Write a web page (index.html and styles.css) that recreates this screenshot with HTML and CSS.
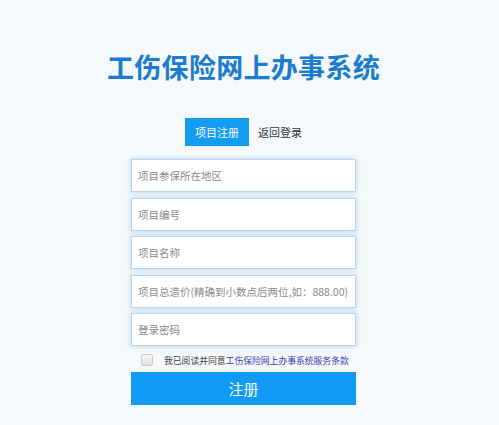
FILE: index.html
```html
<!DOCTYPE html>
<html lang="zh">
<head>
    <meta charset="UTF-8">
    <meta name="viewport" content="width=device-width, initial-scale=1.0">
    <title>工伤保险网上办事系统</title>
    <link rel="stylesheet" href="styles.css">
</head>
<body>
    <div class="page">
        <h1 class="title">工伤保险网上办事系统</h1>

        <div class="tab-group">
            <span class="tab active">项目注册</span>
            <span class="tab">返回登录</span>
        </div>

        <form class="form">
            <input class="field" type="text" placeholder="项目参保所在地区">
            <input class="field" type="text" placeholder="项目编号">
            <input class="field" type="text" placeholder="项目名称">
            <input class="field" type="text" placeholder="项目总造价(精确到小数点后两位,如：888.00)">
            <input class="field" type="password" placeholder="登录密码">

            <label class="agree">
                <span class="check"></span>
                <span>我已阅读并同意<a href="#" class="terms">工伤保险网上办事系统服务条款</a></span>
            </label>

            <button type="button" class="btn-submit">注册</button>
        </form>
    </div>
</body>
</html>
```

FILE: styles.css
```css
body {
    margin: 0;
    background-color: #f5f9fc;
    font-family: "Noto Sans CJK SC", "Liberation Sans", sans-serif;
}
.page {
    width: 487px;
    display: flex;
    flex-direction: column;
    align-items: center;
}
.title {
    margin: 51px 0 0;
    font-size: 27px;
    line-height: 32px;
    font-weight: bold;
    color: #1a7bcf;
    letter-spacing: 0.3px;
}
.tab-group {
    display: flex;
    align-items: center;
    gap: 9px;
    margin-top: 35px;
}
.tab {
    font-size: 11px;
    color: #333;
    line-height: 28px;
}
.tab.active {
    width: 64px;
    text-align: center;
    background: #149bf2;
    color: white;
}
.form {
    width: 225px;
    display: flex;
    flex-direction: column;
    margin-top: 13px;
}
.field {
    box-sizing: border-box;
    height: 33px;
    margin-bottom: 5.5px;
    padding: 0 6px;
    border: 1px solid #b9d6ee;
    background: white;
    box-shadow: 0 0 5px rgba(120, 180, 230, 0.55);
    font-family: inherit;
    font-size: 10.5px;
    color: #333;
    outline: none;
}
.field::placeholder {
    color: #8a8a8a;
}
.agree {
    display: flex;
    align-items: center;
    gap: 11px;
    margin: 0 0 0 10px;
    font-size: 8.8px;
    color: #444;
    height: 17px;
    white-space: nowrap;
}
.check {
    flex: none;
    width: 10px;
    height: 10px;
    border: 1px solid #c8c8c8;
    border-radius: 2px;
    background: linear-gradient(#f4f4f4, #e2e2e2);
}
.terms {
    color: #3b3bb8;
    text-decoration: none;
}
.btn-submit {
    height: 33px;
    margin-top: 3.5px;
    border: none;
    background: #0e9af5;
    color: white;
    font-family: inherit;
    font-size: 15px;
    cursor: pointer;
}
```
